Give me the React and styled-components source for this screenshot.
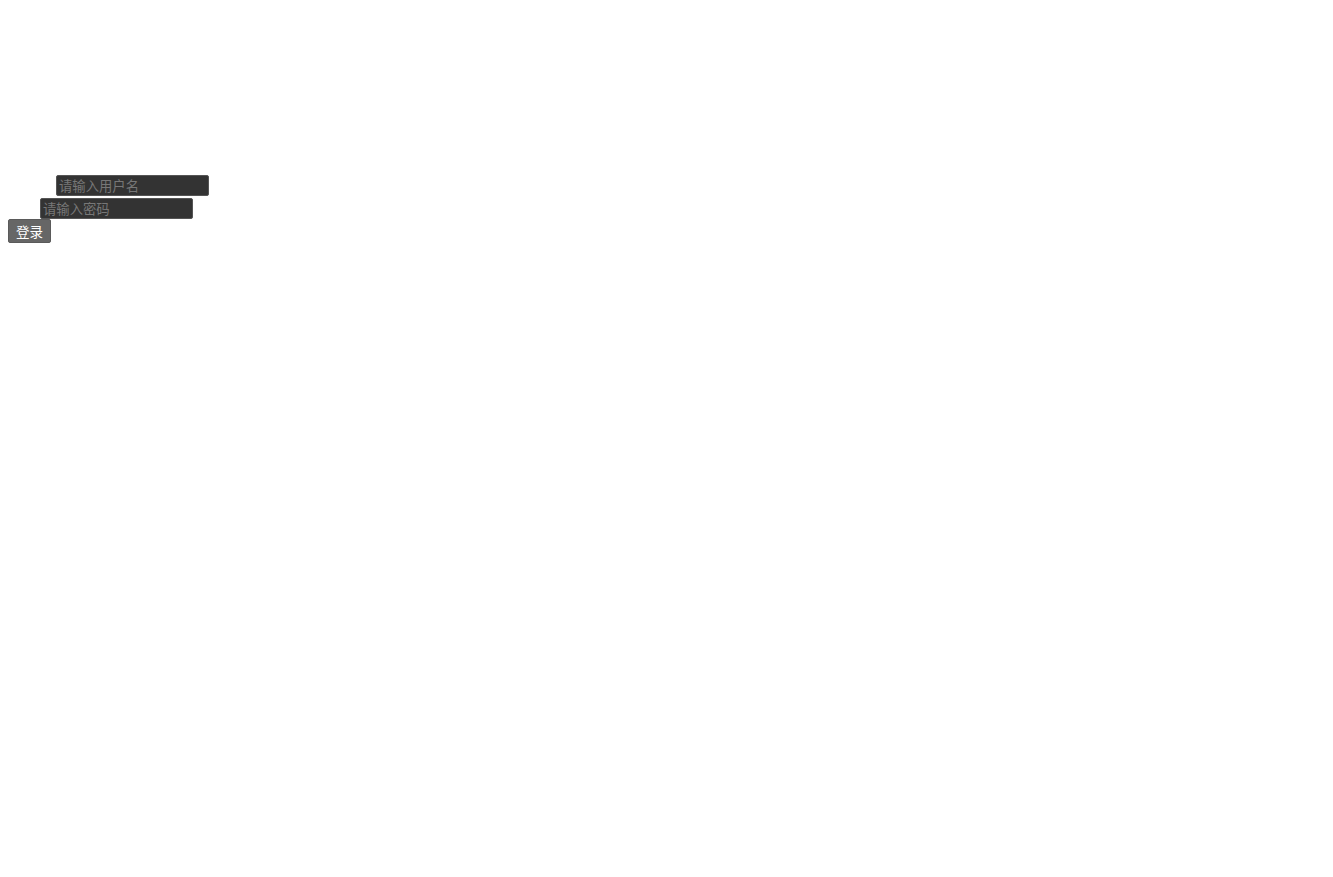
import React from "react";
import styled, { createGlobalStyle } from "styled-components";

const Global = createGlobalStyle`
  html, body { margin: 0; padding: 0; background: #fff; }
  body { font-family: "Noto Sans CJK SC", "Noto Sans", sans-serif; }
`;

const Page = styled.div`
  padding: 175px 8px 0 8px;
  display: flex;
  flex-direction: column;
  align-items: flex-start;
`;

const Row = styled.div`
  display: flex;
  align-items: flex-start;
  margin-bottom: ${(p) => p.$gap || 0}px;
`;

const Label = styled.label`
  color: #fff;
  font-family: "Noto Sans CJK SC", sans-serif;
  font-size: 16px;
  line-height: 21px;
  white-space: nowrap;
`;

const Input = styled.input`
  box-sizing: border-box;
  width: 153px;
  height: 21px;
  margin: 0;
  padding: 1px 2px;
  background: #333;
  border: 1px solid #555;
  border-radius: 2px;
  color: #ddd;
  font-family: "Noto Sans CJK SC", "Noto Sans", sans-serif;
  font-size: 13.33px;
  outline: none;
  &::placeholder { color: #777; }
`;

const Button = styled.button`
  box-sizing: border-box;
  height: 24px;
  width: 43px;
  margin: 0;
  padding: 0;
  background: #666;
  color: #fff;
  border: 1px solid #5a5a5a;
  border-radius: 2px;
  font-family: "Noto Sans CJK SC", "Noto Sans", sans-serif;
  font-size: 13.5px;
  line-height: 20px;
  cursor: pointer;
`;

export default function App() {
  return (
    <>
      <Global />
      <Page>
        <Row $gap={2}>
          <Label>用户名</Label>
          <Input placeholder="请输入用户名" />
        </Row>
        <Row>
          <Label>密码</Label>
          <Input type="password" placeholder="请输入密码" />
        </Row>
        <Button>登录</Button>
      </Page>
    </>
  );
}
